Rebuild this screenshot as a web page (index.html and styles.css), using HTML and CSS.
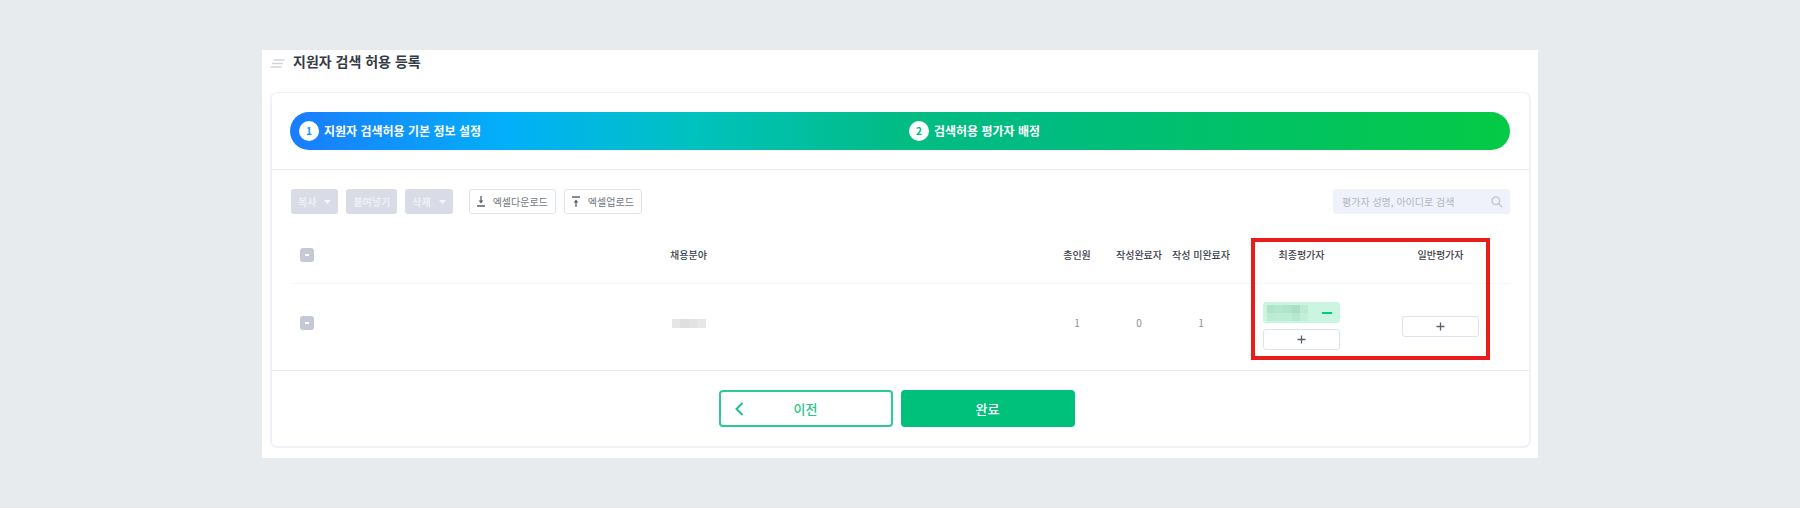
FILE: index.html
```html
<!DOCTYPE html>
<html lang="ko">
<head>
<meta charset="utf-8">
<meta name="viewport" content="width=device-width, initial-scale=1">
<title>지원자 검색 허용 등록</title>
<link rel="stylesheet" href="styles.css">
</head>
<body>
<main class="panel">
  <header class="page-head">
    <svg class="head-icon" width="15" height="9" viewBox="0 0 15 9" aria-hidden="true"><path d="M3.5 1H14.5M2 4.500H13M.5 8H11.500"/></svg>
    <h1 class="page-title">지원자 검색 허용 등록</h1>
  </header>

  <section class="card">
    <div class="steps-wrap">
      <ol class="steps">
        <li class="step"><span class="step-no step-no-blue">1</span><span>지원자 검색허용 기본 정보 설정</span></li>
        <li class="step"><span class="step-no step-no-green">2</span><span>검색허용 평가자 배정</span></li>
      </ol>
    </div>

    <div class="content">
      <div class="toolbar">
        <div class="group">
          <button class="btn btn-muted" type="button" disabled>복사<svg class="caret" width="7" height="4" viewBox="0 0 7 4" aria-hidden="true"><path d="M0 0H7L3.500 4Z"/></svg></button>
          <button class="btn btn-muted" type="button" disabled>붙여넣기</button>
          <button class="btn btn-muted" type="button" disabled>삭제<svg class="caret" width="7" height="4" viewBox="0 0 7 4" aria-hidden="true"><path d="M0 0H7L3.500 4Z"/></svg></button>
        </div>
        <div class="group">
          <button class="btn btn-line" type="button"><svg width="8" height="11" viewBox="0 0 8 11" aria-hidden="true"><path class="stroke" d="M4 0V6M0 10H8"/><path class="fill" d="M1.600 4.500H6.400L4 7.600Z"/></svg>엑셀다운로드</button>
          <button class="btn btn-line" type="button"><svg width="8" height="11" viewBox="0 0 8 11" aria-hidden="true"><path class="stroke" d="M4 5V11M0 1H8"/><path class="fill" d="M1.600 6.500H6.400L4 3.400Z"/></svg>엑셀업로드</button>
        </div>
        <label class="search">
          <input class="search-input" type="search" placeholder="평가자 성명, 아이디로 검색" aria-label="평가자 검색">
          <svg width="12" height="12" viewBox="0 0 12 12" aria-hidden="true"><circle cx="4.800" cy="4.800" r="3.800"/><path d="M7.600 7.600L11.300 11.300"/></svg>
        </label>
      </div>

      <div class="table-wrap">
        <table class="table">
          <colgroup><col class="col-check"><col><col class="col-count"><col class="col-count"><col class="col-count"><col class="col-eval"><col class="col-eval"></colgroup>
          <thead>
            <tr>
              <th class="cell-check"><input class="check" type="checkbox" aria-label="전체 선택"></th>
              <th>채용분야</th><th>총인원</th><th>작성완료자</th><th>작성 미완료자</th><th>최종평가자</th><th>일반평가자</th>
            </tr>
          </thead>
          <tbody>
            <tr>
              <td class="cell-check"><input class="check" type="checkbox" aria-label="행 선택"></td>
              <td><span class="masked"></span></td>
              <td>1</td><td>0</td><td>1</td>
              <td class="cell-eval">
                <div class="evals">
                  <div class="chip"><span class="chip-name"></span><button class="chip-remove" type="button" aria-label="평가자 제거"></button></div>
                  <button class="add" type="button" aria-label="최종평가자 추가"><svg width="9" height="9" viewBox="0 0 9 9" aria-hidden="true"><path d="M4.500 .5V8.500M.5 4.500H8.500"/></svg></button>
                </div>
              </td>
              <td class="cell-eval">
                <div class="evals">
                  <button class="add" type="button" aria-label="일반평가자 추가"><svg width="9" height="9" viewBox="0 0 9 9" aria-hidden="true"><path d="M4.500 .5V8.500M.5 4.500H8.500"/></svg></button>
                </div>
              </td>
            </tr>
          </tbody>
        </table>
        <div class="highlight"></div>
      </div>
    </div>

    <footer class="actions">
      <button class="action action-prev" type="button"><svg class="chevron" width="9" height="14" viewBox="0 0 9 14" aria-hidden="true"><path d="M7.500 1L1.500 7L7.500 13"/></svg>이전</button>
      <button class="action action-done" type="button">완료</button>
    </footer>
  </section>
</main>
</body>
</html>
```
FILE: styles.css
```css
* { box-sizing: border-box; }

body {
  margin: 0;
  padding: 50px 24px;
  background: #e7ebee;
  color: #3c434d;
  font-family: "Noto Sans CJK KR", sans-serif;
  font-size: 10px;
  line-height: 16px;
}

button, input { font: inherit; margin: 0; }
button { display: inline-flex; align-items: center; justify-content: center; }

.panel {
  max-width: 1276px;
  margin: 0 auto;
  padding: 0 7px 10px 8px;
  background: #fff;
}

.page-head { display: flex; align-items: center; gap: 8px; height: 42px; padding-bottom: 20px; }
.head-icon { margin-top: 5px; fill: none; stroke: #d3d5d9; stroke-width: 1.6; }
.page-title { margin: 0; font-size: 14px; line-height: 22px; font-weight: 700; color: #343c45; }

.card { border: 2px solid #f1f2f7; border-top-width: 1px; border-radius: 7px; }

.steps-wrap { padding: 19px 19px 19px 18px; border-bottom: 1px solid #e9ebee; }
.steps {
  display: grid;
  grid-template-columns: 1fr 1fr;
  height: 38px;
  margin: 0;
  padding: 0;
  border-radius: 19px;
  list-style: none;
  color: #fff;
  background: linear-gradient(90deg, #1a7cff 0%, #02b0f9 18%, #00c2bf 33%, #02bc84 50%, #00bc80 62%, #04ca45 100%);
}
.step { display: flex; align-items: center; gap: 5px; padding-left: 9px; font-size: 12px; font-weight: 700; }
.step-no { width: 20px; height: 20px; border-radius: 50%; background: #fff; font-size: 10px; line-height: 20px; text-align: center; }
.step-no-blue { color: #1a90ff; }
.step-no-green { color: #00b783; }

.content { padding: 19px 19px 1px; border-bottom: 1px solid #e9ebf1; }

.toolbar { display: flex; align-items: center; gap: 16px; }
.group { display: flex; gap: 8px; }
.btn { height: 25px; padding: 0 7px; border: 0; border-radius: 3px; gap: 8px; white-space: nowrap; }
.btn-muted { background: #d9dbe6; color: #eff0f5; font-weight: 700; }
.caret { fill: #f6f7fa; }
.btn-line { border: 1px solid #e0e3ec; background: #fff; color: #727983; }
.btn-line .stroke { fill: none; stroke: #59616f; stroke-width: 1.3; }
.btn-line .fill { fill: #59616f; }

.search { display: flex; align-items: center; width: 177px; height: 25px; margin-left: auto; padding: 0 7px 0 9px; border-radius: 3px; background: #eff2fa; }
.search-input { flex: 1; min-width: 0; padding: 0; border: 0; outline: 0; background: none; color: #3c434d; }
.search-input::placeholder { color: #b1b6c1; }
.search svg { fill: none; stroke: #c6c9d2; stroke-width: 1.5; }

.table-wrap { position: relative; padding-top: 13px; }
.table { width: 100%; table-layout: fixed; border-collapse: collapse; text-align: center; }
.col-check { width: 40px; }
.col-count { width: 62px; }
.col-eval { width: 139px; }
.table th { height: 56px; padding: 0; border-bottom: 1px solid #f5f5f7; font-weight: 500; white-space: nowrap; }
.table td { height: 86px; padding: 0 0 6px; color: #8b919a; }
.table .cell-check { text-align: left; padding-left: 9px; }
.table .cell-eval { padding: 0; }

.check { appearance: none; display: grid; place-items: center; width: 14px; height: 14px; border-radius: 3px; background: #c5c8d5; }
.check::before { content: ""; width: 4px; height: 2px; background: #fff; }

.masked { display: block; width: 34px; height: 9px; margin: 0 auto; background: linear-gradient(90deg, #e6e6e6 25%, #dfdfdf 25% 50%, #e2e2e2 50% 75%, #e7e7e7 75%); }

.evals { display: grid; justify-content: center; grid-template-columns: 77px; gap: 6px; }
.chip { display: flex; align-items: center; justify-content: space-between; height: 21px; padding: 0 8px 0 4px; border-radius: 3px; background: #caf5df; }
.chip-name { width: 41px; height: 16px; background: linear-gradient(90deg, #aee5c8 20%, #b4e7cd 20% 40%, #afe4c9 40% 60%, #a9dfc4 60% 80%, #bcebd2 80%) top / 100% 8px no-repeat, linear-gradient(90deg, #bcebd2 20%, #bdecd4 20% 60%, #b6e8ce 60% 80%, #c3efd8 80%); }
.chip-remove { width: 10px; height: 2px; padding: 0; border: 0; background: #05c983; }
.add { height: 21px; padding: 0; border: 1px solid #dfe2ec; border-radius: 3px; background: #fff; }
.add svg { fill: none; stroke: #59616f; stroke-width: 1.3; }

.highlight { position: absolute; top: 24px; right: 20px; width: 239px; height: 122px; border: 4px solid #e91c1c; pointer-events: none; }

.actions { display: flex; justify-content: center; gap: 8px; padding: 19px 24px 19px 16px; }
.action { position: relative; width: 174px; height: 37px; padding: 0; border: 2px solid #00c17c; border-radius: 4px; font-size: 13px; font-weight: 500; }
.action-prev { border-color: #2ccb91; background: #fff; color: #2cc38b; }
.action-done { background: #00c17c; color: #fff; }
.chevron { position: absolute; left: 14px; fill: none; stroke: #1cc186; stroke-width: 2; }
```
